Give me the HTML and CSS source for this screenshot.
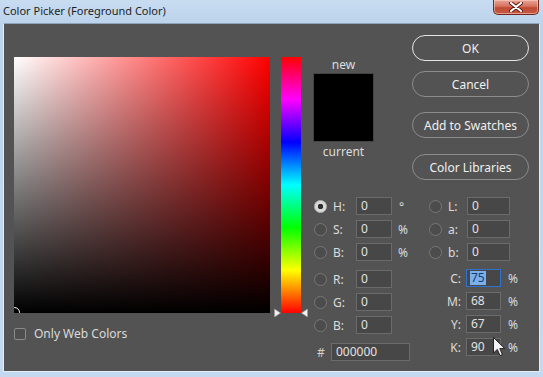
FILE: index.html
```html
<!DOCTYPE html>
<html>
<head>
<meta charset="utf-8">
<link rel="stylesheet" href="styles.css">
</head>
<body>
<div class="window">
  <div class="titlebar">
    <span class="title">Color Picker (Foreground Color)</span>
    <div class="close">
      <svg width="14" height="10" viewBox="0 0 14 10"><path d="M2 1 L12 9 M12 1 L2 9" stroke="#5a1a12" stroke-width="4" stroke-linecap="round"/><path d="M2 1 L12 9 M12 1 L2 9" stroke="#fff" stroke-width="2.2" stroke-linecap="round"/></svg>
    </div>
  </div>
  <div class="panel">
    <div class="left">
      <div class="field"><span class="ring"></span></div>
      <div class="webonly"><span class="checkbox"></span><span>Only Web Colors</span></div>
    </div>
    <div class="hue">
      <svg class="arrow arrow-l" width="7" height="10" viewBox="0 0 7 10"><path d="M0.5 1 L6.5 5 L0.5 9 Z" fill="#f2f2f2" stroke="#999" stroke-width="0.6"/></svg>
      <svg class="arrow arrow-r" width="7" height="10" viewBox="0 0 7 10"><path d="M6.5 1 L0.5 5 L6.5 9 Z" fill="#f2f2f2" stroke="#999" stroke-width="0.6"/></svg>
    </div>
    <div class="right">
      <div class="top">
        <div class="swatch-col">
          <div class="swlabel">new</div>
          <div class="swatch"></div>
          <div class="swlabel current">current</div>
        </div>
        <div class="buttons">
          <div class="btn btn-ok">OK</div>
          <div class="btn btn-cancel">Cancel</div>
          <div class="btn btn-add">Add to Swatches</div>
          <div class="btn btn-lib">Color Libraries</div>
        </div>
      </div>
      <div class="fields">
        <div class="col-a">
          <div class="row"><span class="radio on"></span><span class="lbl">H:</span><span class="inp">0</span><span class="unit deg">°</span></div>
          <div class="row"><span class="radio"></span><span class="lbl">S:</span><span class="inp">0</span><span class="unit">%</span></div>
          <div class="row"><span class="radio"></span><span class="lbl">B:</span><span class="inp">0</span><span class="unit">%</span></div>
          <div class="row grp"><span class="radio"></span><span class="lbl">R:</span><span class="inp">0</span></div>
          <div class="row"><span class="radio"></span><span class="lbl">G:</span><span class="inp">0</span></div>
          <div class="row"><span class="radio"></span><span class="lbl">B:</span><span class="inp">0</span></div>
          <div class="row grp hexrow"><span class="hash">#</span><span class="inp hex">000000</span></div>
        </div>
        <div class="col-b">
          <div class="row"><span class="radio"></span><span class="lbl lab">L:</span><span class="inp wide">0</span></div>
          <div class="row"><span class="radio"></span><span class="lbl lab">a:</span><span class="inp wide">0</span></div>
          <div class="row"><span class="radio"></span><span class="lbl lab">b:</span><span class="inp wide">0</span></div>
          <div class="row grp2"><span class="lbl cmyk">C:</span><span class="inp focus"><span class="sel">75</span></span><span class="unit pct">%</span></div>
          <div class="row"><span class="lbl cmyk">M:</span><span class="inp">68</span><span class="unit pct">%</span></div>
          <div class="row"><span class="lbl cmyk">Y:</span><span class="inp">67</span><span class="unit pct">%</span></div>
          <div class="row"><span class="lbl cmyk">K:</span><span class="inp">90</span><span class="unit pct">%</span></div>
        </div>
      </div>
    </div>
    <svg class="cursor" width="13" height="20" viewBox="0 0 13 20"><path d="M0.5 0.5 L0.5 16 L4.3 12.4 L7 18.6 L9.4 17.6 L6.8 11.6 L11.8 11.6 Z" fill="#f4f4f4" stroke="#222" stroke-width="1" stroke-linejoin="round"/></svg>
  </div>
</div>
</body>
</html>
```

FILE: styles.css
```css
* { box-sizing: border-box; }
html, body { margin: 0; padding: 0; }
body {
  width: 543px;
  height: 377px;
  overflow: hidden;
  background: #c3d8ee;
  font-family: "Noto Sans", "Open Sans", sans-serif;
  font-size: 12px;
}
.window {
  width: 543px;
  height: 377px;
  background: linear-gradient(to bottom, #c8dcf1 0px, #bcd3eb 23px, #c4d9ef 377px);
}
.titlebar {
  height: 23px;
  display: flex;
  align-items: flex-start;
}
.title {
  margin-left: 3px;
  margin-top: 3px;
  font-size: 11px;
  color: #1e1e1e;
  line-height: 15px;
}
.close {
  margin-left: auto;
  margin-right: 4px;
  width: 46px;
  height: 15px;
  border: 1px solid #6e2a20;
  border-top: none;
  border-radius: 0 0 5px 5px;
  background: linear-gradient(to bottom, #e9a596 0%, #d5725f 45%, #c04a33 55%, #c65a43 100%);
  display: flex;
  align-items: center;
  justify-content: center;
  box-shadow: inset 0 0 0 1px rgba(255,220,210,0.5);
}
.close svg { display: block; }
.panel {
  position: relative;
  margin: 0 3px;
  height: 349px;
  background: #535353;
  border: 1px solid #e4ecf5;
  border-top: 1px solid #8ea2b8;
  padding: 11px 0 0 10px;
  display: flex;
  align-items: flex-start;
  color: #dcdcdc;
}
.left { padding-top: 22px; }
.field {
  position: relative;
  width: 256px;
  height: 256px;
  overflow: hidden;
  background: linear-gradient(to top, #000, rgba(0,0,0,0)), linear-gradient(to right, #fff, #f00);
}
.ring {
  position: absolute;
  left: -5px;
  bottom: -5px;
  width: 11px;
  height: 11px;
  border: 1px solid #fff;
  border-radius: 50%;
}
.webonly {
  margin-top: 14px;
  display: flex;
  align-items: center;
  line-height: 14px;
  color: #dadada;
}
.checkbox {
  width: 12px;
  height: 12px;
  border: 1px solid #8a8a8a;
  border-radius: 2px;
  background: #4e4e4e;
  margin-right: 8px;
}
.hue {
  position: relative;
  margin-left: 11px;
  margin-top: 22px;
  width: 20px;
  height: 256px;
  background: linear-gradient(to bottom, #f00 0%, #f0f 16.67%, #00f 33.33%, #0ff 50%, #0f0 66.67%, #ff0 83.33%, #f00 100%);
}
.arrow { position: absolute; bottom: -5px; }
.arrow-l { left: -7px; }
.arrow-r { right: -7px; }
.right {
  margin-left: 12px;
  width: 216px;
}
.top {
  display: flex;
  align-items: flex-start;
  height: 146px;
}
.swatch-col {
  width: 61px;
  padding-top: 22px;
  display: flex;
  flex-direction: column;
  align-items: center;
}
.swlabel {
  line-height: 16px;
  height: 16px;
  color: #dcdcdc;
}
.swatch {
  width: 61px;
  height: 69px;
  background: #000;
  border: 1px solid #444;
}
.current { margin-top: 2px; }
.buttons {
  margin-left: 38px;
  width: 117px;
  display: flex;
  flex-direction: column;
}
.btn {
  height: 26px;
  border: 1px solid #8c8c8c;
  border-radius: 13px;
  display: flex;
  align-items: center;
  justify-content: center;
  color: #f0f0f0;
  font-size: 12px;
}
.btn-ok { border-color: #e6e6e6; }
.btn-cancel { margin-top: 10px; }
.btn-add { margin-top: 15px; }
.btn-lib { margin-top: 16px; }
.fields {
  margin-top: 16px;
  display: flex;
}
.col-a {
  width: 115px;
  display: flex;
  flex-direction: column;
  gap: 5px;
}
.col-b {
  display: flex;
  flex-direction: column;
  gap: 5px;
}
.row {
  height: 18px;
  display: flex;
  align-items: center;
}
.col-a .grp { margin-top: 4px; }
.col-a .hexrow { margin-top: 4px; }
.col-b .grp2 { margin-top: 3px; }
.radio {
  width: 13px;
  height: 13px;
  border: 1px solid #777;
  border-radius: 50%;
  background: #4c4c4c;
  flex: none;
  margin-left: 1px;
}
.radio.on {
  background: radial-gradient(circle, #2e2e2e 0 2.5px, #d9d9d9 3px);
  border-color: #bbb;
}
.lbl {
  margin-left: 6px;
  width: 23px;
  color: #dcdcdc;
}
.lbl.lab { width: 19px; }
.lbl.cmyk {
  margin-left: 0;
  width: 34px;
  text-align: right;
  padding-right: 1px;
}
.inp {
  width: 36px;
  height: 18px;
  background: #474747;
  border: 1px solid #6b6b6b;
  color: #e2e2e2;
  padding-left: 4px;
  line-height: 16px;
  display: flex;
  align-items: center;
}
.col-b .cmyk + .inp { margin-left: 4px; width: 35px; }
.inp.wide { width: 43px; }
.inp.hex { width: 79px; margin-left: 7px; }
.hash { margin-left: 4px; color: #cfcfcf; }
.hexrow .hash { width: 7px; }
.unit { margin-left: 6px; color: #dcdcdc; }
.unit.deg { margin-left: 7px; }
.unit.pct { margin-left: 7px; }
.inp.focus { border-color: #2e73c9; padding-left: 3px; }
.sel {
  background: #7bb0ec;
  color: #163a72;
  padding: 0 1px;
  line-height: 14px;
}
.cursor {
  position: absolute;
  left: 489px;
  top: 313px;
}
```
